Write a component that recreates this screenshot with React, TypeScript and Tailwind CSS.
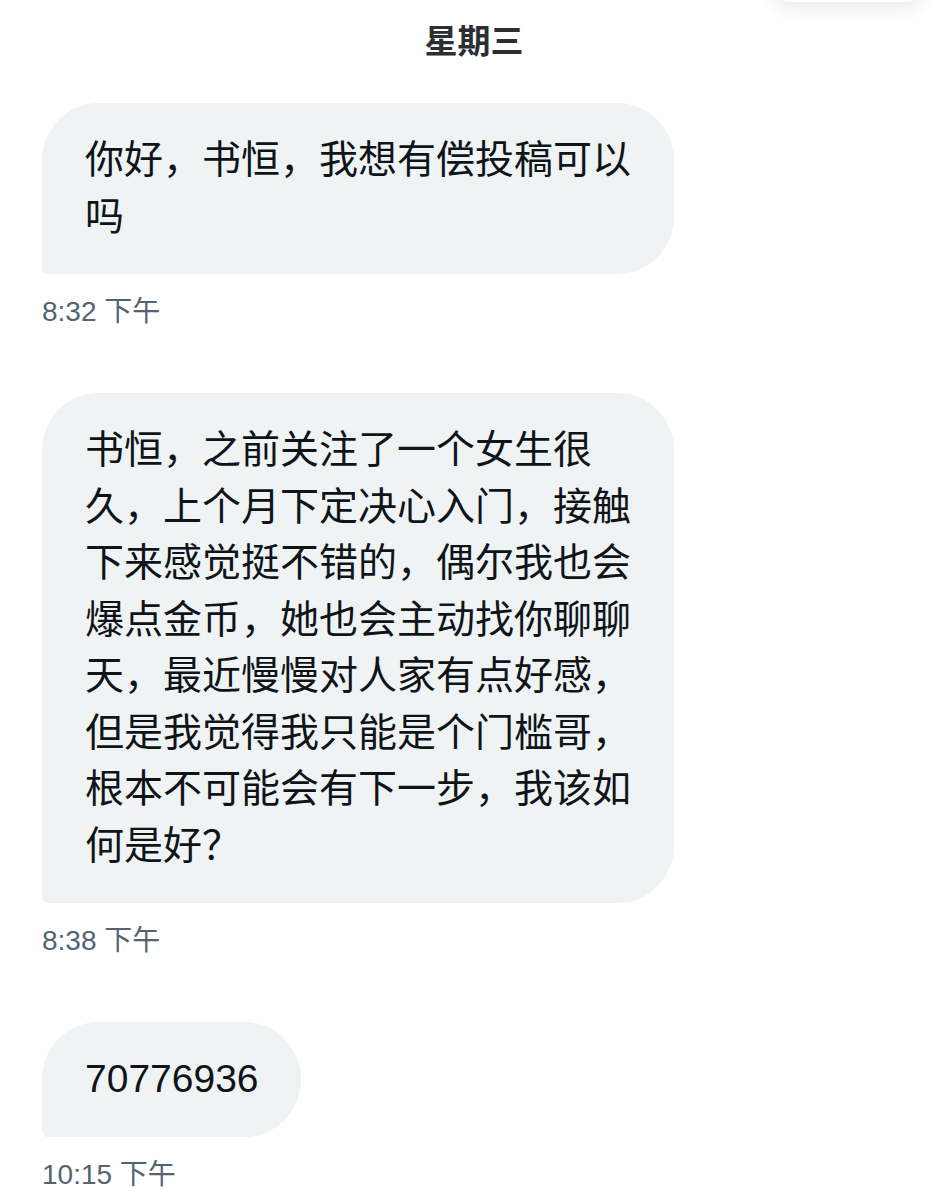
import React from "react";

const font = { fontFamily: '"Liberation Sans", "Noto Sans CJK SC", sans-serif' };

function Bubble({ text }: { text: string }) {
  return (
    <div className="w-fit max-w-[632px] rounded-[57px] rounded-bl-[6px] bg-[#eff3f4] pl-[43px] pr-[42px] py-[29px] text-[39px] leading-[56.5px] text-[#0f1419]">
      {text}
    </div>
  );
}

function Time({ t }: { t: string }) {
  return <div className="mt-[21px] text-[28px] leading-[34px] text-[#536471]">{t}</div>;
}

export default function App() {
  return (
    <div className="relative min-h-[1200px] w-[948px] overflow-hidden bg-white" style={font}>
      <div className="absolute left-[773px] top-[-60px] h-[62px] w-[150px] rounded-2xl bg-white shadow-[0_4px_18px_rgba(0,0,0,0.10)] ring-1 ring-[#eeeeee]" />
      <div className="pt-[22px] text-center text-[33px] font-bold leading-[40px] text-[#2b2e32]">星期三</div>
      <div className="flex flex-col items-start pl-[42px] pt-[41px]">
        <Bubble text="你好，书恒，我想有偿投稿可以吗" />
        <Time t="8:32 下午" />
        <div className="mt-[64px]">
          <Bubble text="书恒，之前关注了一个女生很久，上个月下定决心入门，接触下来感觉挺不错的，偶尔我也会爆点金币，她也会主动找你聊聊天，最近慢慢对人家有点好感，但是我觉得我只能是个门槛哥，根本不可能会有下一步，我该如何是好？" />
        </div>
        <Time t="8:38 下午" />
        <div className="mt-[64px]">
          <Bubble text="70776936" />
        </div>
        <Time t="10:15 下午" />
      </div>
    </div>
  );
}
